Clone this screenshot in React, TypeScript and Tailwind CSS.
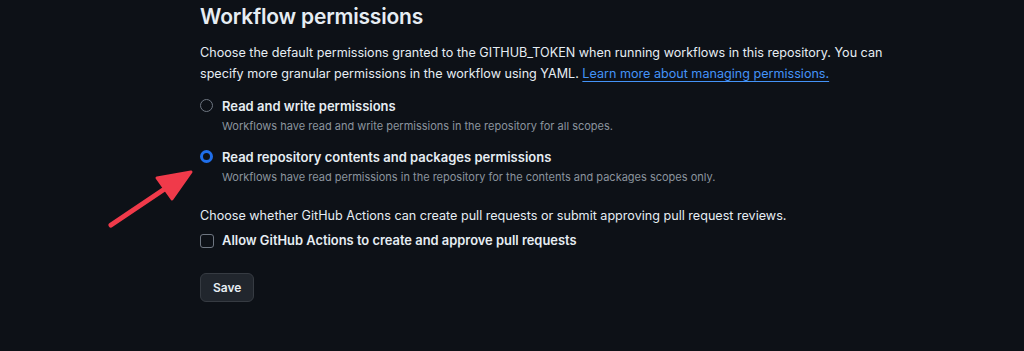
import { useState } from 'react';

function Radio({ checked }: { checked: boolean }) {
  return checked ? (
    <span className="mt-[1px] w-[13px] h-[13px] rounded-full border-[3.5px] border-[#1f6feb] bg-[#0d1117] shrink-0" />
  ) : (
    <span className="mt-[1px] w-[13px] h-[13px] rounded-full border border-[#6e7681] bg-[#0d1117] shrink-0" />
  );
}

export default function App() {
  const [mode] = useState<'write' | 'read'>('read');

  return (
    <div
      className="relative w-[1024px] h-[351px] bg-[#0d1117] text-[#e6edf3] overflow-hidden"
      style={{ fontFamily: 'Inter, "Noto Sans", sans-serif' }}
    >
      <div className="pl-[200px] pt-[2px]">
        <h2 className="text-[21px] leading-[30px] font-semibold tracking-[-0.2px]">Workflow permissions</h2>

        <p className="mt-[10px] text-[12.6px] leading-[21px] text-[#e6edf3] w-[720px]">
          Choose the default permissions granted to the GITHUB_TOKEN when running workflows in this repository. You can
          <br />
          specify more granular permissions in the workflow using YAML.{' '}
          <a className="text-[#4493f8] underline underline-offset-[3px]">Learn more about managing permissions.</a>
        </p>

        <div className="mt-[14px] flex flex-col gap-[15px]">
          <label className="flex items-start gap-[9px]">
            <Radio checked={mode === 'write'} />
            <div>
              <div className="text-[13px] leading-[16px] font-semibold">Read and write permissions</div>
              <div className="mt-[4px] text-[11px] leading-[16px] text-[#8b949e]">
                Workflows have read and write permissions in the repository for all scopes.
              </div>
            </div>
          </label>
          <label className="flex items-start gap-[9px]">
            <Radio checked={mode === 'read'} />
            <div>
              <div className="text-[13px] leading-[16px] font-semibold">Read repository contents and packages permissions</div>
              <div className="mt-[4px] text-[11px] leading-[16px] text-[#8b949e]">
                Workflows have read permissions in the repository for the contents and packages scopes only.
              </div>
            </div>
          </label>
        </div>

        <p className="mt-[20px] text-[12.6px] leading-[21px]">
          Choose whether GitHub Actions can create pull requests or submit approving pull request reviews.
        </p>

        <label className="mt-[7px] flex items-center gap-[8px]">
          <span className="w-[14px] h-[14px] rounded-[3px] border border-[#6e7681] shrink-0" />
          <span className="text-[12.9px] leading-[16px] font-semibold">Allow GitHub Actions to create and approve pull requests</span>
        </label>

        <button className="mt-[24px] h-[29px] px-[12px] rounded-[6px] bg-[#21262d] border border-[#363b42] text-[12px] font-semibold text-[#e6edf3]">
          Save
        </button>
      </div>

      {/* annotation arrow */}
      <svg className="absolute left-0 top-0" width="1024" height="351" viewBox="0 0 1024 351">
        <line x1="111" y1="225" x2="175" y2="182" stroke="#f03a4a" strokeWidth="5" strokeLinecap="round" />
        <polygon points="157,178 191,172 172,199" fill="#f03a4a" stroke="#f03a4a" strokeWidth="3" strokeLinejoin="round" />
      </svg>
    </div>
  );
}
